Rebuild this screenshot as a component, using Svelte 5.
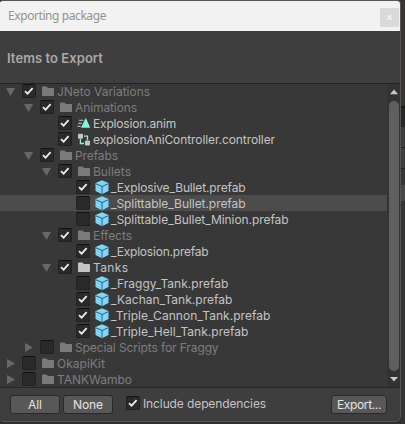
<script>
  // s: fold state (1 open, 0 closed, -1 none), k: icon kind
  const rows = [
    { d: 0, s: 1, c: 1, k: 'folder', t: 'JNeto Variations', dim: 1, w: 93 },
    { d: 1, s: 1, c: 1, k: 'folder', t: 'Animations', dim: 1, w: 62 },
    { d: 2, s: -1, c: 1, k: 'anim', t: 'Explosion.anim', w: 83 },
    { d: 2, s: -1, c: 1, k: 'ctrl', t: 'explosionAniController.controller', w: 182 },
    { d: 1, s: 1, c: 1, k: 'folder', t: 'Prefabs', dim: 1, w: 43 },
    { d: 2, s: 1, c: 1, k: 'folder', t: 'Bullets', dim: 1, w: 38 },
    { d: 3, s: -1, c: 1, k: 'cube', t: '_Explosive_Bullet.prefab', w: 134.5 },
    { d: 3, s: -1, c: 0, k: 'cube', t: '_Splittable_Bullet.prefab', w: 134.5, sel: 1 },
    { d: 3, s: -1, c: 0, k: 'cube', t: '_Splittable_Bullet_Minion.prefab', w: 177.5 },
    { d: 2, s: 1, c: 1, k: 'folder', t: 'Effects', dim: 1, w: 39 },
    { d: 3, s: -1, c: 1, k: 'cube', t: '_Explosion.prefab', w: 97.5 },
    { d: 2, s: 1, c: 1, k: 'folder', t: 'Tanks', w: 35.5 },
    { d: 3, s: -1, c: 0, k: 'cube', t: '_Fraggy_Tank.prefab', w: 117.5 },
    { d: 3, s: -1, c: 1, k: 'cube', t: '_Kachan_Tank.prefab', w: 121.5 },
    { d: 3, s: -1, c: 1, k: 'cube', t: '_Triple_Cannon_Tank.prefab', w: 159.5 },
    { d: 3, s: -1, c: 1, k: 'cube', t: '_Triple_Hell_Tank.prefab', w: 137.5 },
    { d: 1, s: 0, c: 0, k: 'folder', t: 'Special Scripts for Fraggy', dim: 1, w: 143.5 },
    { d: 0, s: 0, c: 0, k: 'folder', t: 'OkapiKit', dim: 1, w: 48 },
    { d: 0, s: 0, c: 0, k: 'folder', t: 'TANKWambo', dim: 1, w: 75 }
  ];

  // Spreads the letters so that the label takes the given width.
  function fit(node, width) {
    const natural = node.getBoundingClientRect().width;
    node.style.letterSpacing = (width - natural) / node.textContent.length + 'px';
  }
</script>

{#snippet check(on)}
  <span class="check">
    {#if on}
      <svg width="14" height="14" viewBox="0 0 14 14"><path d="M3 7.1 L5.6 9.6 L10.6 4.2" fill="none" stroke="#ededed" stroke-width="1.8" /></svg>
    {/if}
  </span>
{/snippet}

<div class="screen">
  <div class="window">
    <header>
      <span class="title" use:fit={98}>Exporting package</span>
      <span class="close"><svg width="5" height="5" viewBox="0 0 5 5"><path d="M.3 .3L4.7 4.7M4.7 .3L.3 4.7" stroke="#f2f2f2" stroke-width="1.5" /></svg></span>
    </header>
    <div class="heading"><span use:fit={96}>Items to Export</span></div>
    <div class="body">
      <div class="tree">
        {#each rows as r}
          <div class="row" class:sel={r.sel} class:dim={r.dim} style="padding-left:{4 + r.d * 18}px">
            <span class="fold">
              {#if r.s === 1}
                <svg width="14" height="16" viewBox="0 0 14 16"><path d="M2 5H11L6.5 13Z" fill="#686868" /></svg>
              {:else if r.s === 0}
                <svg width="14" height="16" viewBox="0 0 14 16"><path d="M3 4L11 8.5L3 13Z" fill="#686868" /></svg>
              {/if}
            </span>
            {@render check(r.c)}
            <svg class="icon" width="16" height="16" viewBox="0 0 16 16">
              {#if r.k === 'folder'}
                <path d="M2 4.2Q2 3.4 2.8 3.4H6.4L8 5H13.2Q14 5 14 5.8V12.2Q14 13 13.2 13H2.8Q2 13 2 12.2Z" fill={r.dim ? '#7b7b7b' : '#c4c4c4'} />
              {:else if r.k === 'anim'}
                <path d="M9.3 3.7Q9.8 3 10.3 3.7L14.2 12.7H5Z" fill="#7ff5dc" />
                <path d="M3 5.2H7.4M2 8.2H6M1.5 11.2H4.8" stroke="#b8c9c5" stroke-width="1.1" />
              {:else if r.k === 'ctrl'}
                <path d="M8 5.2H11.5V9M4.4 8V12.5H8" fill="none" stroke="#7ff5dc" stroke-width="1.3" />
                <rect x="2" y="2.7" width="5" height="5" rx="1" fill="#c4c4c4" />
                <rect x="9" y="9.5" width="5" height="5" rx="1" fill="#c4c4c4" />
              {:else}
                <path d="M8 1.3L14.5 4.1V12L8 15.3L1.5 12V4.1Z" fill="#7fd6fd" />
                <path d="M2 4.8L8 7.5L14 4.8M8 7.5V15.2" fill="none" stroke="#34586b" stroke-width="1" />
              {/if}
            </svg>
            <span class="label" use:fit={r.w}>{r.t}</span>
          </div>
        {/each}
      </div>
      <div class="scroll">
        <svg width="12" height="17" viewBox="0 0 12 17"><path d="M2 10.2L6 5.5L10 10.2Z" fill="#c8c8c8" /></svg>
        <div class="thumb"></div>
        <svg width="12" height="16" viewBox="0 0 12 16"><path d="M2 6L6 10.5L10 6Z" fill="#c8c8c8" /></svg>
      </div>
    </div>
    <footer>
      <button class="all"><span use:fit={14}>All</span></button>
      <button class="none"><span use:fit={30}>None</span></button>
      <label>{@render check(1)}<span use:fit={123}>Include dependencies</span></label>
      <button class="export"><span use:fit={44}>Export...</span></button>
    </footer>
  </div>
  <div class="behind"><i></i><i></i><i></i><i></i><i></i></div>
</div>

<style>
  .screen { width: 405px; height: 424px; display: flex; overflow: hidden; background: #303030; font-family: Inter, sans-serif; font-size: 12px; color: #c4c4c4; }
  .window { box-sizing: border-box; width: 401px; height: 422px; display: flex; flex-direction: column; background: #3e3e3e; border: solid #555; border-width: 1px 1px 1px 0; border-radius: 3px 4px 6px 4px; overflow: hidden; }
  .behind { box-sizing: border-box; width: 4px; height: 424px; padding-top: 106px; background: linear-gradient(#383632 106px, #343434 106px); display: flex; flex-direction: column; }
  .behind i { height: 19px; flex: none; border-top: 1px solid #222; background: #3e3e3e; }
  .behind i:nth-child(1) { border-top: 2px solid #1b1b1b; background: #272727; }
  .behind i:nth-child(2) { height: 20px; border: 0; }
  .behind i:nth-child(3) { height: 20px; }
  .behind i:nth-child(4) { height: 16px; background: #363636; }
  .behind i:nth-child(5) { height: 16px; border: 0; background: #484848; }
  span { white-space: nowrap; }
  header { height: 30px; flex: none; display: flex; justify-content: space-between; background: #f2f2f2; color: #929292; font-family: "Noto Sans", sans-serif; font-size: 12px; line-height: 30px; }
  .title { margin-left: 8px; align-self: flex-start; }
  .close { width: 19px; height: 19px; margin: 7px 1px 0 0; display: flex; align-items: center; justify-content: center; background: #dadada; }
  .heading { height: 52px; flex: none; padding-left: 7px; font-size: 13px; line-height: 55px; font-weight: 600; color: #a9a9a9; }
  .body { height: 303px; flex: none; display: flex; border-top: 1px solid #232323; border-bottom: 1px solid #262626; background: #383838; }
  .tree { width: 387px; margin-top: -1px; }
  .row { box-sizing: border-box; height: 16px; display: flex; line-height: 17px; }
  .row.sel { background: #4c4c4c; }
  .row.dim { color: #7d7d7d; }
  .fold { width: 18px; height: 16px; }
  .fold svg { display: block; }
  .check { box-sizing: border-box; width: 14px; height: 14px; flex: none; margin-top: 1px; background: #2a2a2a; border: 1px solid #212121; border-top-color: #111; border-radius: 2px; }
  .check svg { display: block; margin: -1px; }
  .icon { margin: 0 1px 0 4px; flex: none; }
  .scroll { width: 13px; display: flex; flex-direction: column; align-items: center; background: #333; }
  .scroll svg { display: block; }
  .thumb { width: 10px; height: 270px; border-radius: 5px; background: #5f5f5f; }
  footer { flex: 1; display: flex; align-items: flex-start; padding: 7px 13px 0 10px; background: #3e3e3e; }
  button { box-sizing: border-box; height: 19px; padding: 0; border: 1px solid #292929; border-radius: 3px; background: #585858; color: #e4e4e4; font: 12px/17px Inter, sans-serif; }
  .all { width: 50px; }
  .none { width: 50px; margin-left: 3px; }
  .export { width: 56px; margin-left: auto; }
  label { display: flex; margin-left: 13px; gap: 3px; line-height: 18px; }
</style>
